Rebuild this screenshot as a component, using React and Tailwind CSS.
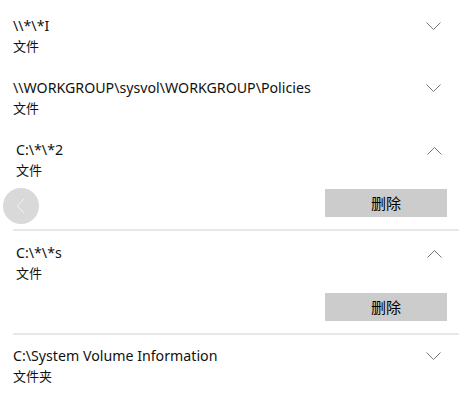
import React from "react";

const Chevron = ({ up }) => (
  <svg width="15" height="8" viewBox="0 0 15 8" className="shrink-0">
    <polyline
      points={up ? "0.5,7.5 7.5,0.5 14.5,7.5" : "0.5,0.5 7.5,7.5 14.5,0.5"}
      fill="none"
      stroke="#777"
      strokeWidth="1"
    />
  </svg>
);

const Collapsed = ({ title, sub }) => (
  <div className="flex items-start justify-between pl-[13px] pr-[24px] py-[11px]">
    <div className="leading-[20px]">
      <div className="text-[14.2px]">{title}</div>
      <div className="text-[13px]">{sub}</div>
    </div>
    <div className="pt-[6px]">
      <Chevron />
    </div>
  </div>
);

const Expanded = ({ title, sub, extraGap }) => (
  <div className="pl-[13px] pr-[6px]">
    <div className="flex items-start justify-between pl-[3px] pr-[17px] pt-[11px]">
      <div className="leading-[20px]">
        <div className="text-[14.2px]">{title}</div>
        <div className="text-[13px]">{sub}</div>
      </div>
      <div className="pt-[7px]">
        <Chevron up />
      </div>
    </div>
    <div className={`flex justify-end pr-[12px] ${extraGap ? "mt-[10px]" : "mt-[9px]"} mb-[12px]`}>
      <button className="w-[122px] h-[28px] bg-[#cccccc] text-[15px] text-black flex items-center justify-center">
        删除
      </button>
    </div>
    <div className="h-[2px] bg-[#e8e8e8]" />
  </div>
);

export default function App() {
  return (
    <div
      className="relative w-[465px] h-[401px] bg-white text-[#111] overflow-hidden pt-[5px]"
      style={{ fontFamily: '"Noto Sans", "Noto Sans CJK SC", sans-serif' }}
    >
      <Collapsed title="\\*\*I" sub="文件" />
      <Collapsed title="\\WORKGROUP\sysvol\WORKGROUP\Policies" sub="文件" />
      <Expanded title="C:\*\*2" sub="文件" />
      <div className="pt-px">
        <Expanded title="C:\*\*s" sub="文件" extraGap />
      </div>
      <Collapsed title="C:\System Volume Information" sub="文件夹" />
      <div className="absolute left-[3px] top-[188px] w-[36px] h-[36px] rounded-full bg-[#d9d9d9] flex items-center justify-center">
        <svg width="10" height="16" viewBox="0 0 10 16">
          <polyline points="8,1 1.5,8 8,15" fill="none" stroke="#f4f4f4" strokeWidth="1" />
        </svg>
      </div>
    </div>
  );
}
